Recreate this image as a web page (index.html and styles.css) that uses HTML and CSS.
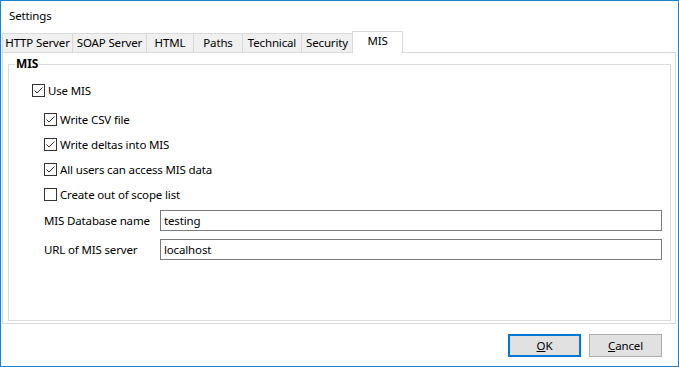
FILE: index.html
```html
<!DOCTYPE html>
<html>
<head>
<meta charset="utf-8">
<link rel="stylesheet" href="styles.css">
</head>
<body>
<div class="window">
  <div class="titlebar">Settings</div>
  <div class="tabs">
    <div class="tab w-http">HTTP Server</div>
    <div class="tab w-soap">SOAP Server</div>
    <div class="tab w-html">HTML</div>
    <div class="tab w-paths">Paths</div>
    <div class="tab w-tech">Technical</div>
    <div class="tab w-sec">Security</div>
    <div class="tab w-mis selected">MIS</div>
  </div>
  <div class="panel">
    <fieldset class="group">
      <legend class="legend">MIS</legend>
      <div class="content">
        <div class="row first">
          <span class="cb"><svg width="11" height="11" viewBox="0 0 11 11"><path d="M1.5 5.5 L4 8 L9.5 2.5" fill="none" stroke="#333" stroke-width="1"/></svg></span>
          <span class="label">Use MIS</span>
        </div>
        <div class="sub">
          <div class="row">
            <span class="cb"><svg width="11" height="11" viewBox="0 0 11 11"><path d="M1.5 5.5 L4 8 L9.5 2.5" fill="none" stroke="#333" stroke-width="1"/></svg></span>
            <span class="label">Write CSV file</span>
          </div>
          <div class="row">
            <span class="cb"><svg width="11" height="11" viewBox="0 0 11 11"><path d="M1.5 5.5 L4 8 L9.5 2.5" fill="none" stroke="#333" stroke-width="1"/></svg></span>
            <span class="label">Write deltas into MIS</span>
          </div>
          <div class="row">
            <span class="cb"><svg width="11" height="11" viewBox="0 0 11 11"><path d="M1.5 5.5 L4 8 L9.5 2.5" fill="none" stroke="#333" stroke-width="1"/></svg></span>
            <span class="label">All users can access MIS data</span>
          </div>
          <div class="row">
            <span class="cb"></span>
            <span class="label">Create out of scope list</span>
          </div>
          <div class="field f1">
            <span class="flabel">MIS Database name</span>
            <div class="input">testing</div>
          </div>
          <div class="field f2">
            <span class="flabel">URL of MIS server</span>
            <div class="input">localhost</div>
          </div>
        </div>
      </div>
    </fieldset>
  </div>
  <div class="footer">
    <div class="btn default"><u>O</u>K</div>
    <div class="btn"><u>C</u>ancel</div>
  </div>
</div>
</body>
</html>
```

FILE: styles.css
```css
html, body {
  margin: 0;
  padding: 0;
  background: #ffffff;
}
body {
  font-family: "Noto Sans", "Open Sans", sans-serif;
  font-size: 11.5px;
  letter-spacing: -0.15px;
  color: #000;
}
.window {
  width: 679px;
  height: 367px;
  box-sizing: border-box;
  border: 1px solid #1883d7;
  background: #fff;
  display: flex;
  flex-direction: column;
}
.titlebar {
  height: 30px;
  line-height: 30px;
  padding-left: 8px;
}
.tabs {
  display: flex;
  align-items: flex-end;
  height: 21px;
  padding-left: 1px;
}
.tab {
  box-sizing: border-box;
  height: 19px;
  line-height: 17px;
  border: 1px solid #d9d9d9;
  border-bottom: none;
  margin-right: -1px;
  background: #f0f0f0;
  text-align: center;
  white-space: nowrap;
}
.tab.selected {
  height: 22px;
  line-height: 18px;
  background: #fff;
  margin-bottom: -1px;
  margin-right: 0;
  position: relative;
  z-index: 1;
}
.w-http { width: 71px; }
.w-soap { width: 75px; }
.w-html { width: 48px; }
.w-paths { width: 50px; }
.w-tech { width: 60px; }
.w-sec { width: 52px; }
.w-mis { width: 51px; }
.panel {
  margin-left: 1px;
  width: 674px;
  height: 272px;
  box-sizing: border-box;
  border: 1px solid #d9d9d9;
  padding: 3px 0 0 5px;
}
.group {
  margin: 0;
  padding: 0;
  min-width: 0;
  width: 663px;
  height: 265px;
  box-sizing: border-box;
  border: 1px solid #dcdcdc;
}
.legend {
  padding: 0 1px;
  margin-left: 6px;
  font-weight: bold;
  font-size: 12px;
  line-height: 16px;
}
.content {
  padding: 10px 0 0 23px;
}
.row {
  display: flex;
  align-items: center;
  gap: 3px;
  height: 17px;
  margin-bottom: 8px;
  white-space: nowrap;
}
.row.first {
  margin-bottom: 12px;
}
.sub {
  padding-left: 12px;
}
.cb {
  width: 13px;
  height: 13px;
  box-sizing: border-box;
  border: 1px solid #333;
  background: #fff;
  display: flex;
  align-items: center;
  justify-content: center;
  flex: none;
}
.cb svg {
  display: block;
}
.field {
  display: flex;
  align-items: center;
  height: 21px;
}
.f1 { margin-top: -1px; }
.f2 { margin-top: 8px; }
.flabel {
  width: 116px;
  white-space: nowrap;
}
.input {
  width: 502px;
  height: 21px;
  box-sizing: border-box;
  border: 1px solid #7a7a7a;
  padding-left: 3px;
  line-height: 19px;
}
.footer {
  display: flex;
  justify-content: flex-end;
  gap: 8px;
  padding: 10px 16px 0 0;
}
.btn {
  width: 73px;
  height: 23px;
  box-sizing: border-box;
  border: 1px solid #adadad;
  background: #e1e1e1;
  text-align: center;
  line-height: 21px;
}
.btn.default {
  border: 2px solid #0078d7;
  line-height: 19px;
}
```
